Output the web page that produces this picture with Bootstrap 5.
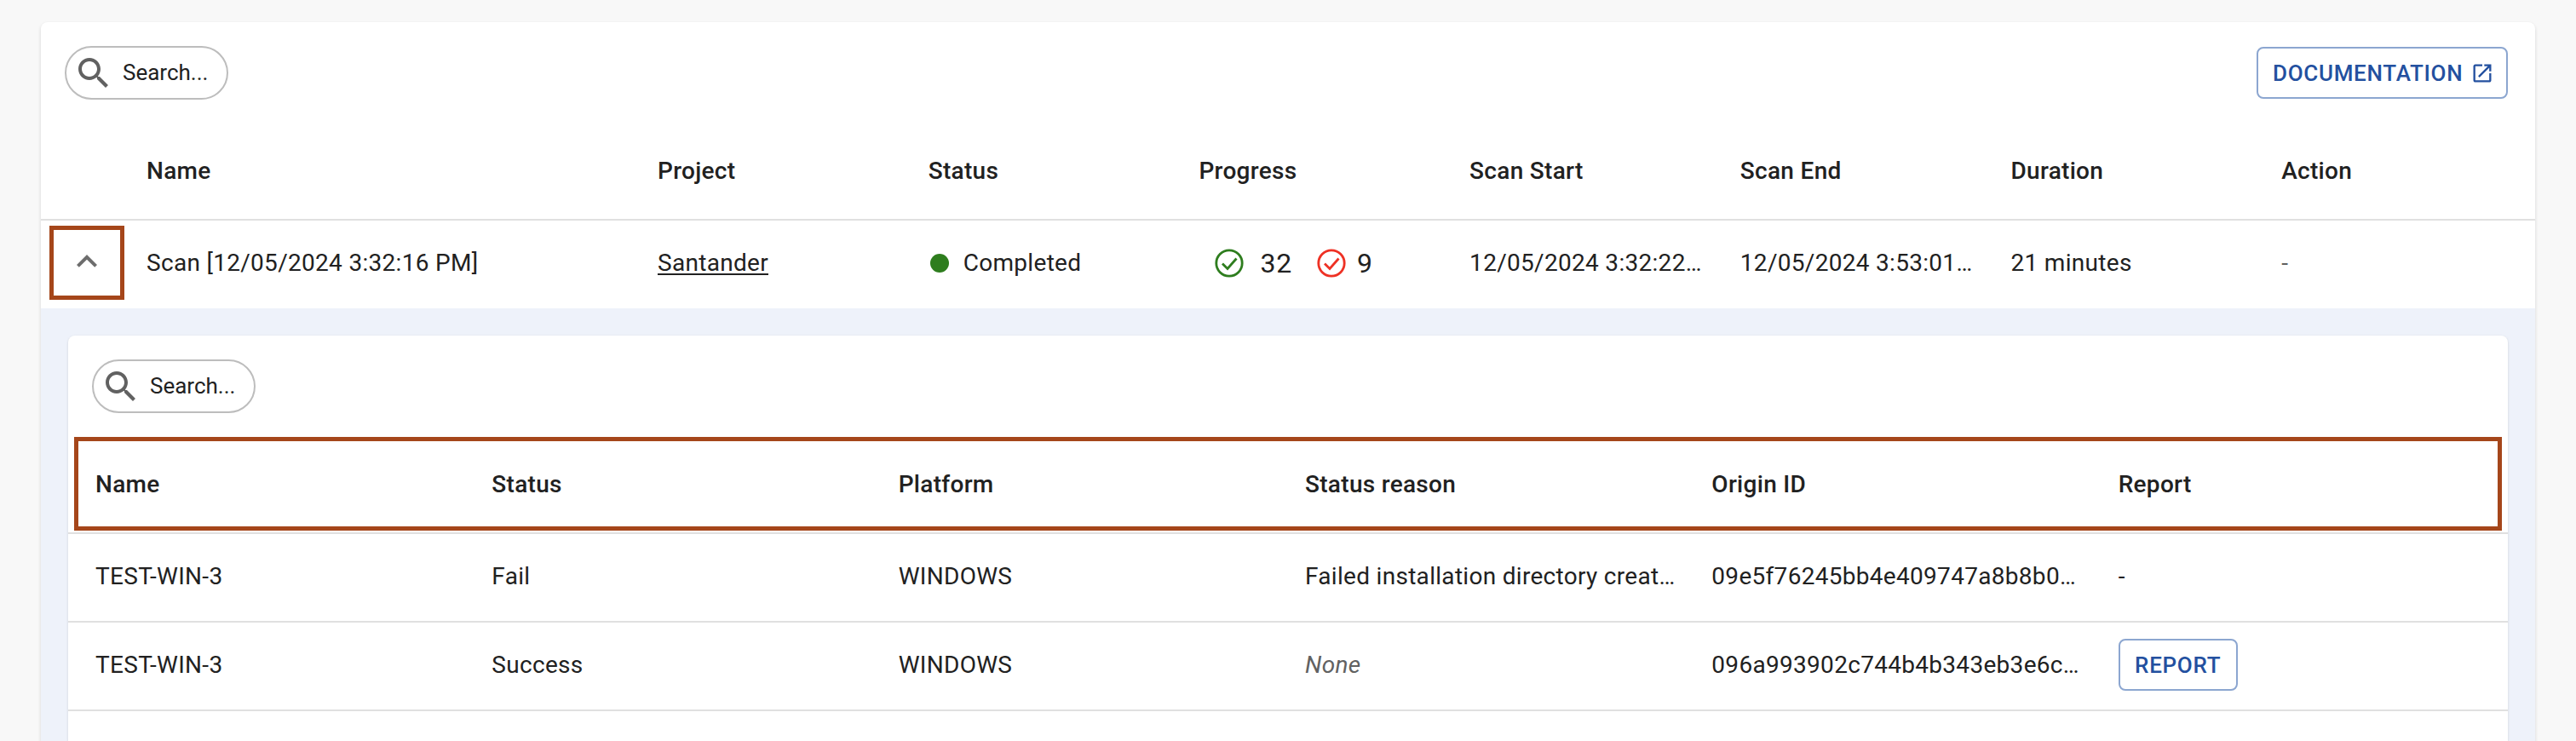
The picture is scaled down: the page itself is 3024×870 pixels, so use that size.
<!DOCTYPE html>
<html lang="en">
<head>
<meta charset="utf-8">
<title>Scans</title>
<link href="https://cdn.jsdelivr.net/npm/bootstrap@5.3.0/dist/css/bootstrap.min.css" rel="stylesheet">
<style>
html,body{height:870px;overflow:hidden;background:#f8f8f8;}
body{font-family:Roboto,"Liberation Sans",sans-serif;font-size:28px;color:#212121;padding:26px 48px 0;}
.panel{background:#fff;border-radius:8px 8px 0 0;box-shadow:0 2px 4px rgba(0,0,0,.14);height:844px;overflow:hidden;}
.toolbar{height:117px;padding:28px 32px 0 28px;align-items:flex-start;}
.search-pill{width:192px;height:63px;border:2px solid #bdbdbd;border-radius:32px;padding-left:8px;gap:10px;font-size:26px;background:#fff;color:#212121;}
.search-pill svg{width:48px;height:48px;fill:#616161;flex:none;}
.outline-blue{border:2px solid #8ca6d0;border-radius:8px;color:#23509f;background:#fff;font-size:26px;font-weight:500;letter-spacing:.7px;line-height:1;text-transform:uppercase;height:61px;display:inline-flex;align-items:center;padding:0 18px;}
.outline-blue:hover{color:#23509f;border-color:#8ca6d0;}
.outline-blue svg{width:28px;height:28px;fill:#23509f;}
.btn-doc{width:295px;margin-top:1px;padding:0 14px 0 17px;white-space:nowrap;justify-content:space-between;}
.btn-report{width:140px;justify-content:center;padding:0;}
.data-table{table-layout:fixed;width:100%;margin:0;border-collapse:collapse;}
.data-table th,.data-table td{padding:0 20px;vertical-align:middle;white-space:nowrap;overflow:hidden;text-overflow:ellipsis;color:#212121;background:transparent;box-shadow:none;border-bottom:2px solid #e0e0e0;font-size:28px;letter-spacing:.3px;}
.data-table th{font-weight:500;height:115px;padding-top:2px;}
.data-table td{height:104px;font-weight:400;padding-bottom:3px;}
.col-expand{width:104px;}
.col-name{width:600px;}
.outer-table td.cell-expand{padding:0;border-bottom:0;overflow:visible;}
.outer-table tr.scan-row td{border-bottom:0;}
.expand-box{width:88px;height:87px;margin:-4px 0 0 10px;border:5px solid #a5461a;background:#fff;padding-bottom:4px;}
.expand-box svg{width:48px;height:48px;fill:#6d6d6d;}
.scan-link{color:#212121;text-decoration:underline;text-underline-offset:3px;}
.dot{width:22px;height:22px;border-radius:50%;background:#2e7d1e;margin:0 17px 0 2px;flex:none;display:inline-block;}
.data-table td.prog{font-size:32px;padding-left:39px;letter-spacing:.8px;}
.prog svg{width:34px;height:34px;flex:none;}
.prog .num-ok{margin:0 29px 0 19px;}
.prog .num-bad{margin-left:13px;}
.data-table td.muted-cell{color:#616161;}
.band{background:#eef2fa;padding:32px 32px 0;height:508px;overflow:hidden;}
.inner-panel{background:#fff;border-radius:8px 8px 0 0;box-shadow:0 1px 3px rgba(0,0,0,.14);height:476px;overflow:hidden;}
.inner-table th:first-child,.inner-table td:first-child{padding-left:32px;}
.header-wrap{position:relative;}
.annot{position:absolute;left:7px;right:7px;top:2px;height:110px;border:5px solid #a5461a;pointer-events:none;}
</style>
</head>
<body>
<div class="panel">
  <div class="toolbar d-flex justify-content-between">
    <div class="search-pill d-flex align-items-center">
      <svg viewBox="0 0 24 24"><path d="M15.5 14h-.79l-.28-.27C15.41 12.59 16 11.11 16 9.5 16 5.91 13.09 3 9.5 3S3 5.91 3 9.5 5.91 16 9.5 16c1.61 0 3.09-.59 4.23-1.57l.27.28v.79l5 4.99L20.49 19l-4.99-5zm-6 0C7.01 14 5 11.99 5 9.5S7.01 5 9.5 5 14 7.01 14 9.5 11.99 14 9.5 14z"/></svg>
      <span>Search...</span>
    </div>
    <a class="btn outline-blue btn-doc" href="#">Documentation
      <svg viewBox="0 0 24 24"><path d="M19 19H5V5h7V3H5c-1.11 0-2 .9-2 2v14c0 1.1.89 2 2 2h14c1.1 0 2-.9 2-2v-7h-2v7zM14 3v2h3.59l-9.83 9.83 1.41 1.41L19 6.41V10h2V3h-7z"/></svg>
    </a>
  </div>
  <table class="table data-table outer-table">
    <colgroup><col class="col-expand"><col class="col-name"><col><col><col><col><col><col><col></colgroup>
    <thead>
      <tr><th></th><th>Name</th><th>Project</th><th>Status</th><th>Progress</th><th>Scan Start</th><th>Scan End</th><th>Duration</th><th>Action</th></tr>
    </thead>
    <tbody>
      <tr class="scan-row">
        <td class="cell-expand">
          <div class="expand-box d-flex align-items-center justify-content-center">
            <svg viewBox="0 0 24 24"><path d="M12 8l-6 6 1.41 1.41L12 10.83l4.59 4.58L18 14z"/></svg>
          </div>
        </td>
        <td>Scan [12/05/2024 3:32:16 PM]</td>
        <td><a class="scan-link" href="#">Santander</a></td>
        <td><span class="d-flex align-items-center"><span class="dot"></span>Completed</span></td>
        <td class="prog">
          <span class="d-flex align-items-center">
            <svg viewBox="0 0 34 34" fill="none" stroke="#2e7d1e" stroke-width="2.8"><circle cx="17" cy="17" r="15.2"/><path d="M9 17.5l6 6L25.5 11.5"/></svg>
            <span class="num-ok">32</span>
            <svg viewBox="0 0 34 34" fill="none" stroke="#ee3124" stroke-width="2.8"><circle cx="17" cy="17" r="15.2"/><path d="M9 17.5l6 6L25.5 11.5"/></svg>
            <span class="num-bad">9</span>
          </span>
        </td>
        <td>12/05/2024 3:32:22 PM</td>
        <td>12/05/2024 3:53:01 PM</td>
        <td>21 minutes</td>
        <td class="muted-cell">-</td>
      </tr>
    </tbody>
  </table>
  <div class="band">
    <div class="inner-panel">
      <div class="toolbar d-flex">
        <div class="search-pill d-flex align-items-center">
          <svg viewBox="0 0 24 24"><path d="M15.5 14h-.79l-.28-.27C15.41 12.59 16 11.11 16 9.5 16 5.91 13.09 3 9.5 3S3 5.91 3 9.5 5.91 16 9.5 16c1.61 0 3.09-.59 4.23-1.57l.27.28v.79l5 4.99L20.49 19l-4.99-5zm-6 0C7.01 14 5 11.99 5 9.5S7.01 5 9.5 5 14 7.01 14 9.5 11.99 14 9.5 14z"/></svg>
          <span>Search...</span>
        </div>
      </div>
      <div class="header-wrap">
        <div class="annot"></div>
        <table class="table data-table inner-table">
          <thead>
            <tr><th>Name</th><th>Status</th><th>Platform</th><th>Status reason</th><th>Origin ID</th><th>Report</th></tr>
          </thead>
          <tbody>
            <tr><td>TEST-WIN-3</td><td>Fail</td><td>WINDOWS</td><td>Failed installation directory creation</td><td>09e5f76245bb4e409747a8b8b0c1d2e3</td><td>-</td></tr>
            <tr><td>TEST-WIN-3</td><td>Success</td><td>WINDOWS</td><td class="muted-cell"><em>None</em></td><td>096a993902c744b4b343eb3e6c7f8a91</td><td><a class="btn outline-blue btn-report" href="#">Report</a></td></tr>
          </tbody>
        </table>
      </div>
    </div>
  </div>
</div>
<script src="https://cdn.jsdelivr.net/npm/bootstrap@5.3.0/dist/js/bootstrap.bundle.min.js"></script>
</body>
</html>
